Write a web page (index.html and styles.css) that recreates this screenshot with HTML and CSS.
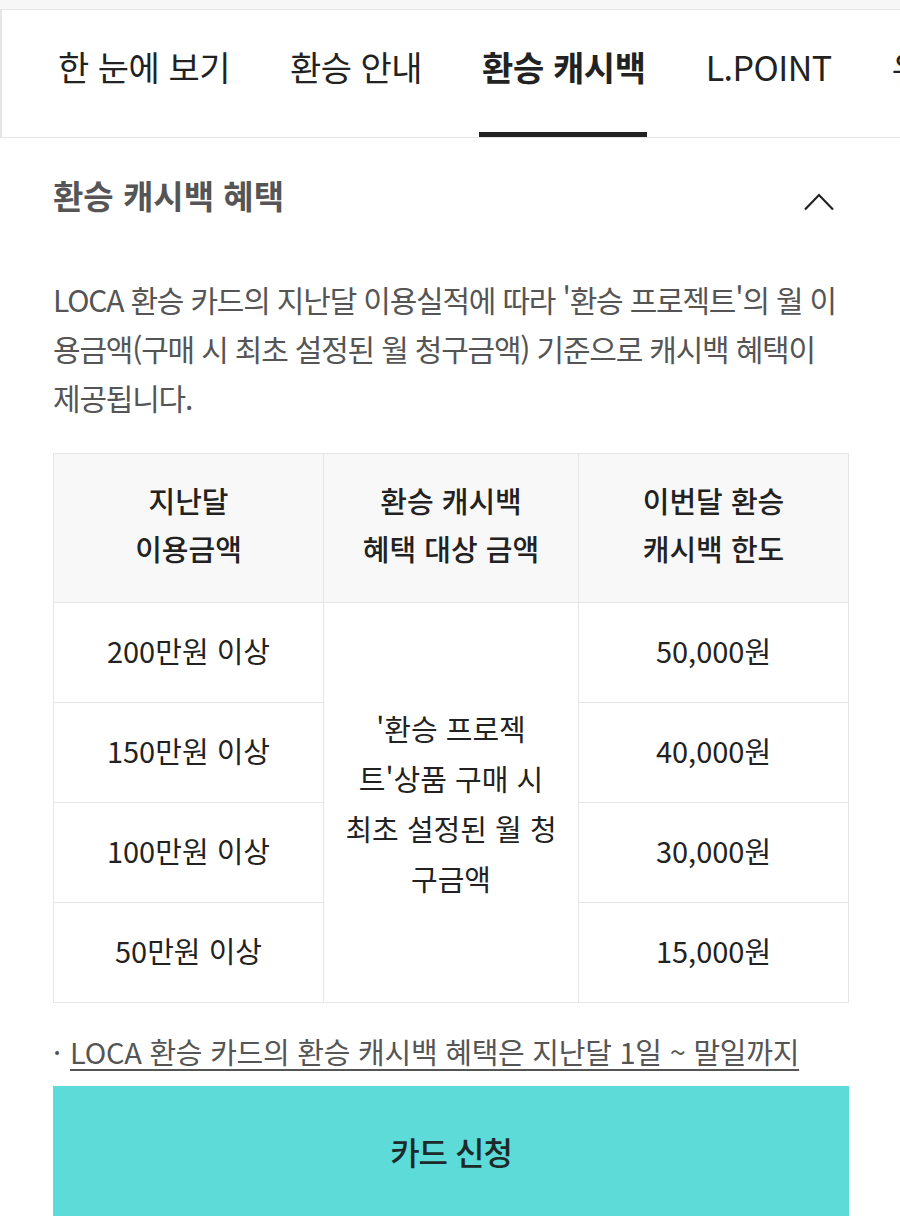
FILE: index.html
```html
<!DOCTYPE html>
<html lang="ko">
<head>
    <meta charset="UTF-8">
    <title>LOCA 환승 카드</title>
    <link rel="stylesheet" href="styles.css">
</head>
<body>
    <div class="top-strip"></div>

    <nav class="tab-bar">
        <a class="tab">한 눈에 보기</a>
        <a class="tab">환승 안내</a>
        <a class="tab active">환승 캐시백</a>
        <a class="tab">L.POINT</a>
        <a class="tab">유의사항</a>
    </nav>

    <section class="content">
        <div class="section-head">
            <h2>환승 캐시백 혜택</h2>
            <svg class="chevron" width="30" height="18" viewBox="0 0 30 18">
                <polyline points="1,16.5 15,2 29,16.5" fill="none" stroke="#222" stroke-width="2.2"/>
            </svg>
        </div>

        <p class="desc">LOCA 환승 카드의 지난달 이용실적에 따라 '환승 프로젝트'의 월 이<br>용금액(구매 시 최초 설정된 월 청구금액) 기준으로 캐시백 혜택이<br>제공됩니다.</p>

        <table class="benefit-table">
            <colgroup>
                <col style="width: 270px">
                <col style="width: 255px">
                <col>
            </colgroup>
            <thead>
                <tr>
                    <th>지난달<br>이용금액</th>
                    <th>환승 캐시백<br>혜택 대상 금액</th>
                    <th>이번달 환승<br>캐시백 한도</th>
                </tr>
            </thead>
            <tbody>
                <tr>
                    <td>200만원 이상</td>
                    <td class="merged" rowspan="4">'환승 프로젝<br>트'상품 구매 시<br>최초 설정된 월 청<br>구금액</td>
                    <td>50,000원</td>
                </tr>
                <tr>
                    <td>150만원 이상</td>
                    <td>40,000원</td>
                </tr>
                <tr>
                    <td>100만원 이상</td>
                    <td>30,000원</td>
                </tr>
                <tr>
                    <td>50만원 이상</td>
                    <td>15,000원</td>
                </tr>
            </tbody>
        </table>

        <ul class="notes">
            <li><a>LOCA 환승 카드의 환승 캐시백 혜택은 지난달 1일 ~ 말일까지 이용하신 실적을 기준으로 하며, 익월에 적용됩니다.</a></li>
        </ul>
    </section>

    <div class="bottom-bar">
        <button class="apply-button">카드 신청</button>
    </div>
</body>
</html>
```

FILE: styles.css
```css
:root {
    --text: #222222;
    --sub: #555555;
    --line: #e6e6e6;
    --mint: #5ddbd8;
}

body {
    margin: 0;
    background: #ffffff;
    color: var(--text);
    font-family: "Noto Sans CJK KR", "Noto Sans", sans-serif;
    overflow: hidden;
}

.top-strip {
    height: 9px;
    background: #f7f7f7;
}

/* 탭 메뉴 */
.tab-bar {
    display: flex;
    gap: 56px;
    padding-left: 54px;
    border-top: 1px solid var(--line);
    border-bottom: 1px solid var(--line);
    border-left: 2px solid var(--line);
    white-space: nowrap;
    overflow: hidden;
}

.tab {
    position: relative;
    display: block;
    flex-shrink: 0;
    padding: 32px 2px 45px;
    font-size: 34px;
    line-height: 50px;
    letter-spacing: -0.5px;
    color: var(--text);
    text-decoration: none;
}

.tab.active {
    font-weight: 700;
    letter-spacing: -0.4px;
}

.tab.active::after {
    content: "";
    position: absolute;
    left: -1px;
    right: 1px;
    bottom: 0;
    height: 5px;
    background: #222;
}

.content {
    padding: 0 51px 0 53px;
}

.section-head {
    display: flex;
    justify-content: space-between;
    align-items: center;
    margin-top: 33px;
}

.section-head h2 {
    margin: 0;
    font-size: 33px;
    line-height: 48px;
    font-weight: 700;
    letter-spacing: 0;
    color: var(--sub);
}

.chevron {
    margin: 14px 15px 0 0;
}

.desc {
    margin: 56px 0 0;
    font-size: 30px;
    line-height: 49px;
    letter-spacing: -1.2px;
    color: var(--sub);
}

/* 캐시백 표 */
.benefit-table {
    width: 100%;
    margin-top: 31px;
    border-collapse: collapse;
    table-layout: fixed;
}

.benefit-table th,
.benefit-table td {
    border: 1px solid var(--line);
    text-align: center;
    font-size: 29px;
    color: var(--text);
}

.benefit-table th {
    height: 96px;
    padding: 22px 10px 30px;
    line-height: 48px;
    font-weight: 500;
    background: #f8f8f8;
}

.benefit-table td {
    height: 93px;
    padding: 0 8px 6px;
    line-height: 50px;
}

.benefit-table td.merged {
    padding: 0 4px;
    line-height: 50px;
    white-space: nowrap;
}

.notes {
    margin: 24px 0 0;
    padding: 0;
    list-style: none;
}

.notes li {
    position: relative;
    padding-left: 17px;
    font-size: 29px;
    line-height: 48px;
    letter-spacing: -0.25px;
    color: var(--sub);
    word-break: keep-all;
}

.notes li::before {
    content: "·";
    position: absolute;
    left: 0;
    top: 0;
}

.notes a {
    color: var(--sub);
    text-decoration: underline;
    text-underline-offset: 5px;
}

/* 하단 고정 버튼 */
.bottom-bar {
    position: fixed;
    left: 0;
    right: 0;
    bottom: 0;
    padding: 12px 51px 4px 53px;
    background: linear-gradient(rgba(255,255,255,0.4), #ffffff 12px);
}

.apply-button {
    display: block;
    width: 100%;
    height: 130px;
    border: none;
    background: var(--mint);
    color: #1c2a2a;
    font-family: inherit;
    font-size: 32px;
    font-weight: 500;
    letter-spacing: -1px;
    cursor: pointer;
}
```
